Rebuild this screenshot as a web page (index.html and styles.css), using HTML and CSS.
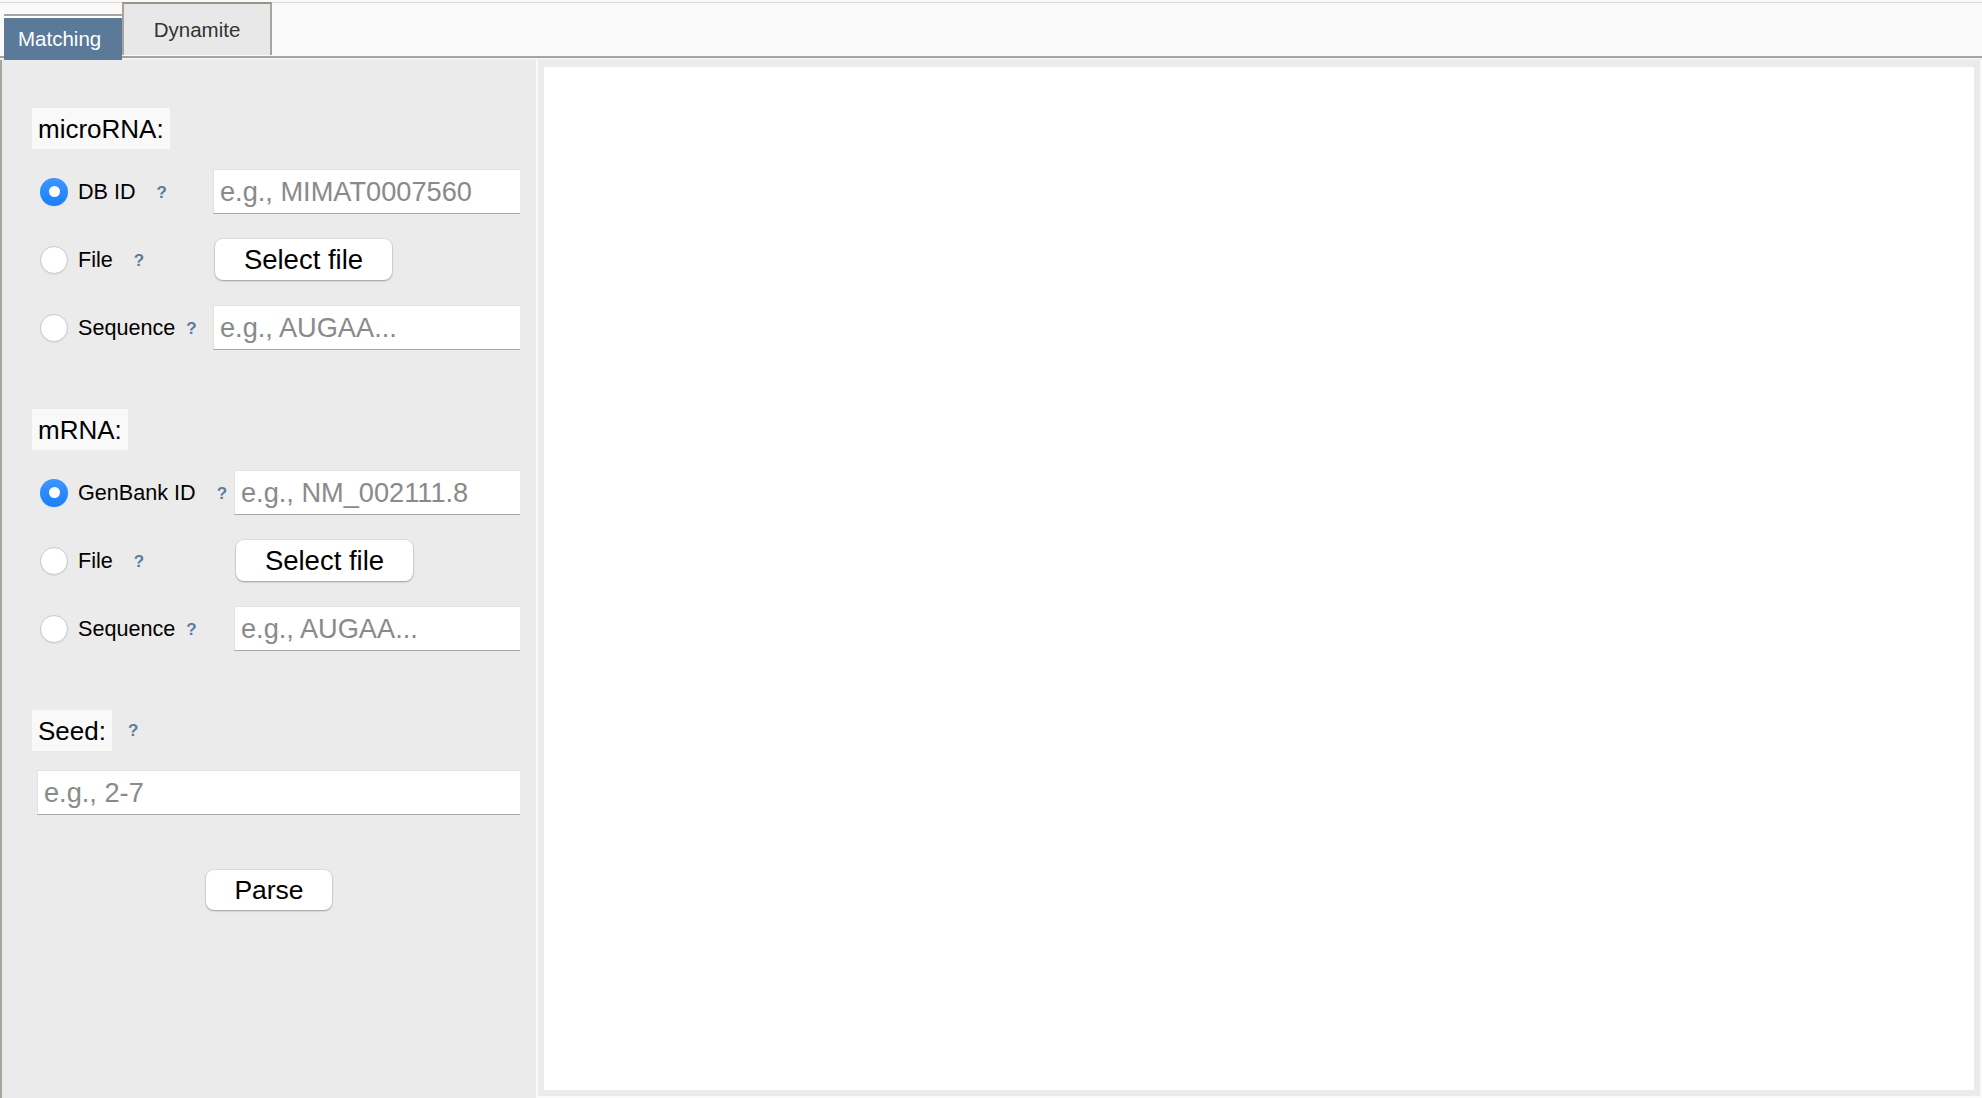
FILE: index.html
```html
<!DOCTYPE html>
<html>
<head>
<meta charset="utf-8">
<title>Matching</title>
<link rel="stylesheet" href="styles.css">
</head>
<body>
<div class="tabbar">
  <div class="tab tab-active">Matching</div>
  <div class="tab tab-idle">Dynamite</div>
</div>
<div class="gapline"></div>
<div class="main">
  <div class="left">
    <div class="group">
      <div class="heading">microRNA:</div>
      <div class="rows">
        <div class="row">
          <div class="opt opt-a"><span class="radio on"></span><span class="lbl">DB ID</span><span class="help">?</span></div>
          <input class="field" type="text" placeholder="e.g., MIMAT0007560">
        </div>
        <div class="row">
          <div class="opt opt-a"><span class="radio"></span><span class="lbl">File</span><span class="help">?</span></div>
          <button class="btn btn-file">Select file</button>
        </div>
        <div class="row">
          <div class="opt opt-a"><span class="radio"></span><span class="lbl">Sequence</span><span class="help help-tight">?</span></div>
          <input class="field" type="text" placeholder="e.g., AUGAA...">
        </div>
      </div>
    </div>
    <div class="group">
      <div class="heading">mRNA:</div>
      <div class="rows">
        <div class="row">
          <div class="opt opt-b"><span class="radio on"></span><span class="lbl">GenBank ID</span><span class="help">?</span></div>
          <input class="field" type="text" placeholder="e.g., NM_002111.8">
        </div>
        <div class="row">
          <div class="opt opt-b"><span class="radio"></span><span class="lbl">File</span><span class="help">?</span></div>
          <button class="btn btn-file">Select file</button>
        </div>
        <div class="row">
          <div class="opt opt-b"><span class="radio"></span><span class="lbl">Sequence</span><span class="help help-tight">?</span></div>
          <input class="field" type="text" placeholder="e.g., AUGAA...">
        </div>
      </div>
    </div>
    <div class="group group-seed">
      <div class="seedhead"><div class="heading">Seed:</div><span class="help help-seed">?</span></div>
      <input class="field field-seed" type="text" placeholder="e.g., 2-7">
    </div>
    <div class="parse-wrap"><button class="btn btn-parse">Parse</button></div>
  </div>
  <div class="right">
    <div class="canvas"></div>
  </div>
</div>
</body>
</html>
```
FILE: styles.css
```css
html, body {
  margin: 0;
  padding: 0;
}
body {
  width: 1982px;
  height: 1098px;
  overflow: hidden;
  background: #fafafa;
  font-family: "Liberation Sans", Arial, sans-serif;
  color: #000;
}
.tabbar {
  margin-top: 2px;
  border-top: 1px solid #d8d8d8;
  border-bottom: 2px solid #a9a49b;
  height: 53px;
  display: flex;
  align-items: flex-start;
  padding-left: 4px;
  background: #fafafa;
}
.tab {
  box-sizing: border-box;
  font-size: 20.5px;
}
.tab-active {
  position: relative;
  z-index: 2;
  margin-top: 11px;
  width: 118px;
  height: 46px;
  margin-bottom: -4px;
  border-top: 2px solid #a9a49b;
  box-shadow: inset 0 2px 0 #ffffff;
  background: #5b7a99;
  color: #ffffff;
  padding-left: 14px;
  padding-top: 2px;
  line-height: 42px;
}
.tab-idle {
  width: 150px;
  height: 53px;
  margin-top: -1px;
  border: 2px solid #a9a49b;
  border-top-color: #9a948b;
  border-bottom: none;
  background: #e8e8e8;
  color: #333333;
  text-align: center;
  padding-top: 14px;
  line-height: 24px;
}
.gapline {
  height: 2px;
  background: #f2f2f2;
}
.main {
  display: flex;
  height: 1038px;
}
.left {
  box-sizing: border-box;
  width: 536px;
  height: 1038px;
  border-left: 2px solid #a9a49b;
  background: #ebebeb;
  padding: 48px 16px 0 30px;
}
.right {
  box-sizing: border-box;
  margin-left: 2px;
  width: 1442px;
  height: 1036px;
  background: #ebebeb;
  padding: 7px 6px 6px 6px;
}
.canvas {
  width: 100%;
  height: 100%;
  background: #ffffff;
}
.group {
  margin-bottom: 59px;
}
.heading {
  display: inline-block;
  background: #f9f9f9;
  font-size: 26px;
  height: 41px;
  line-height: 42px;
  padding: 0 6px;
}
.rows {
  margin-top: 20px;
  display: flex;
  flex-direction: column;
  gap: 23px;
}
.row {
  display: flex;
  align-items: center;
  height: 45px;
}
.opt {
  box-sizing: border-box;
  display: flex;
  align-items: center;
  padding-left: 8px;
  flex: none;
}
.opt-a { width: 181px; }
.opt-b { width: 202px; }
.radio {
  box-sizing: border-box;
  width: 28px;
  height: 28px;
  border-radius: 50%;
  background: #ffffff;
  border: 1px solid #c9c9c9;
  box-shadow: 0 1px 1px rgba(0,0,0,0.06);
  flex: none;
  display: flex;
  align-items: center;
  justify-content: center;
}
.radio.on {
  border: none;
  background: linear-gradient(#3d97ff, #1a7ef9);
}
.radio.on::after {
  content: "";
  width: 11px;
  height: 11px;
  border-radius: 50%;
  background: #ffffff;
}
.lbl {
  margin-left: 10px;
  font-size: 21.6px;
}
.help {
  margin-left: 21px;
  margin-top: 3px;
  font-size: 17px;
  font-weight: bold;
  color: #5b7b9b;
}
.help-tight {
  margin-left: 11px;
}
.field {
  box-sizing: border-box;
  flex: 1;
  min-width: 0;
  height: 45px;
  margin: 0;
  border: 1px solid #e2e2e2;
  border-bottom: 1px solid #a8a8a8;
  border-right: none;
  border-radius: 0;
  background: #ffffff;
  padding: 0 0 0 6px;
  font-family: "Liberation Sans", Arial, sans-serif;
  font-size: 27.2px;
  color: #000;
  outline: none;
}
.field::placeholder {
  color: #8a8a8a;
}
.btn {
  box-sizing: border-box;
  margin: 0;
  border: none;
  border-radius: 8px;
  background: #ffffff;
  box-shadow: 0 0 0 1px rgba(0,0,0,0.05), 0 1px 2px rgba(0,0,0,0.3);
  font-family: "Liberation Sans", Arial, sans-serif;
  color: #000;
  padding: 0;
}
.btn-file {
  margin-left: 2px;
  width: 177px;
  height: 41px;
  font-size: 27.5px;
}
.seedhead {
  display: flex;
  align-items: center;
}
.help-seed {
  margin-left: 16px;
  margin-top: 0;
}
.field-seed {
  display: block;
  width: 483px;
  margin: 19px 0 0 5px;
}
.group-seed {
  margin-bottom: 55px;
}
.parse-wrap {
  margin: 0 -16px 0 -30px;
  display: flex;
  justify-content: center;
}
.btn-parse {
  width: 126px;
  height: 40px;
  font-size: 26.5px;
}
```
